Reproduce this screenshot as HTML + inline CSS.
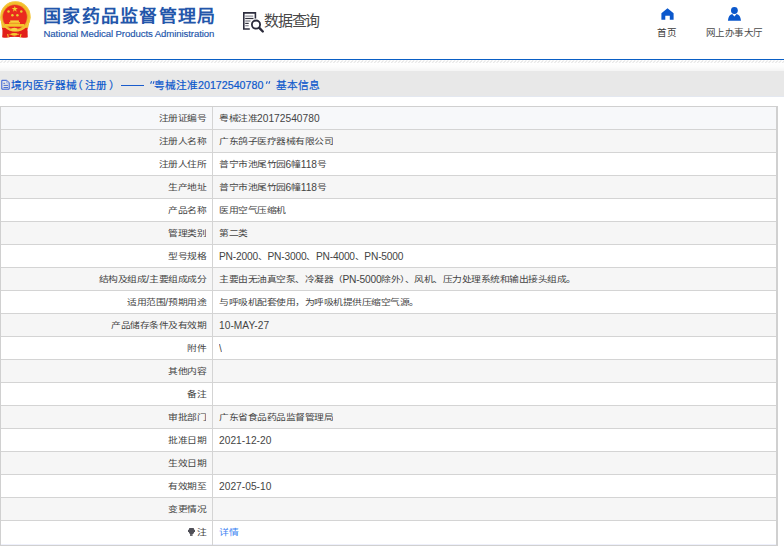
<!DOCTYPE html>
<html lang="zh-CN">
<head>
<meta charset="utf-8">
<style>
*{margin:0;padding:0;box-sizing:border-box;}
html,body{width:784px;height:551px;overflow:hidden;background:#fff;font-family:"Liberation Sans",sans-serif;}
.abs{position:absolute;}
#emblem{left:0;top:0;}
#t1{left:43px;top:1.2px;font-size:18px;font-weight:bold;color:#2356aa;white-space:nowrap;letter-spacing:1.3px;transform:scaleY(0.95);transform-origin:0 22px;}
#t2{left:43.5px;top:28px;font-size:9.6px;color:#2255aa;-webkit-text-stroke:0.15px #2255aa;white-space:nowrap;letter-spacing:-0.09px;}
#icons{left:0;top:0;}
#sqt{left:264px;top:9px;font-size:15px;color:#484848;white-space:nowrap;letter-spacing:-1.2px;}
#homet{left:657px;top:25px;font-size:9.5px;color:#3a3a3a;white-space:nowrap;}
#usert{left:706px;top:25px;font-size:9.5px;color:#4a4a4a;white-space:nowrap;letter-spacing:-0.6px;}
#bl{left:0;top:59px;width:784px;height:1px;background:#0a5fc5;}
#hatch{left:0;top:60px;width:784px;height:3px;}
#grad{left:0;top:63px;width:784px;height:8px;background:linear-gradient(#fff,#fcfcfc 50%,#f4f4f4);}
#band{left:0;top:71px;width:784px;height:26px;background:#e8e8e8;border-bottom:1px solid #e4e8f0;}
#bico{left:1px;top:79px;}
.bt{position:absolute;top:77px;font-size:10.7px;color:#0d58cc;white-space:nowrap;-webkit-text-stroke:0.2px #0d58cc;}
#tbl{left:0;top:106px;width:778px;border:1px solid #d0d0d0;border-right-width:2px;}
.r{height:23px;border-top:1px solid #d4d4d4;position:relative;font-size:9.8px;letter-spacing:-0.5px;color:#444;}
.r b{font-weight:normal;letter-spacing:0.03px;font-size:10.2px;vertical-align:-1px;}
.r b.p{letter-spacing:-0.18px;}
.s{display:inline-block;transform:scaleY(0.86);transform-origin:50% 15px;}
.s b{display:inline-block;transform:scaleY(1.163);transform-origin:50% 15px;}
.r:first-child{border-top:none;height:22px;}
.r:last-child{height:25px;box-shadow:inset 0 -1px 0 #eef0fb;}
.r:nth-child(even){background:#f6f6f6;}
.r:first-child{background:#f7f8fa;}
.bulb{display:inline-block;width:7px;height:9px;margin-right:2px;vertical-align:-1px;transform:scaleY(1.163);background:radial-gradient(circle at 3.5px 3.3px,#505058 3.1px,transparent 3.4px),linear-gradient(#0000 5.5px,#6a6a70 5.5px,#6a6a70 8px,#0000 8px) 2.2px 0/2.6px 9px no-repeat;}
.l{position:absolute;left:0;top:0;width:212px;height:100%;border-right:1px solid #d4d4d4;text-align:right;padding-right:6px;line-height:22px;white-space:nowrap;}
.v{position:absolute;left:218px;top:0;height:100%;line-height:22px;white-space:nowrap;}
a{color:#3d84f2;text-decoration:none;}
</style>
</head>
<body>
<svg id="emblem" class="abs" width="34" height="40" viewBox="0 0 34 40">
  <path d="M1.8 27.2 H28 L27.4 30 Q27.2 34 27.6 37.2 Q21 37.8 14.6 36.6 Q8 37.8 2.4 37.2 Q2.8 34 2.4 30Z" fill="#e2201a"/>
  <circle cx="15.4" cy="16.4" r="15.2" fill="#f2bd2a"/>
  <path d="M0.3 17 H4 L5 27.8 H1.9Z M30.5 17 H26.8 L25.8 27.8 H28.2Z" fill="#f2bd2a"/>
  <circle cx="15.4" cy="16.4" r="14.8" fill="none" stroke="#f8d860" stroke-width="0.7" opacity="0.6"/>
  <circle cx="14.9" cy="17" r="12.5" fill="#ea2a1e"/>
  <circle cx="14.9" cy="17" r="12.5" fill="none" stroke="#e8d040" stroke-width="0.6" opacity="0.7"/>
  <rect x="10.2" y="20.4" width="8.7" height="1.8" fill="#f6d23e"/>
  <rect x="9.1" y="22.1" width="10.9" height="1.6" fill="#f4cc30"/>
  <rect x="5" y="24" width="19.1" height="2.7" fill="#f4c82c"/>
  <ellipse cx="14.3" cy="29.3" rx="3.2" ry="1.5" fill="#f8d448"/>
  <path d="M3 30.5 Q9 33.6 14.6 33.4 Q20.5 33.6 27.4 30.5 L27.5 37.2 Q21 37.8 14.6 36.6 Q8 37.8 2.4 37.2Z" fill="#e2201a"/>
  <ellipse cx="14.3" cy="34.3" rx="3.3" ry="1.4" fill="#f4cc30"/>
  <path d="M7 34 L8.3 34.3 L8.8 37.3 L7.8 37.3Z M21.6 34 L20.3 34.3 L19.8 37.3 L20.8 37.3Z" fill="#f4cc30"/>
  <path d="M9.5 34.3 H19" stroke="#f4cc30" stroke-width="0.8"/>
  <polygon points="14.8,5.9 15.55,8.1 17.9,8.1 16,9.5 16.7,11.7 14.8,10.3 12.9,11.7 13.6,9.5 11.7,8.1 14.05,8.1" fill="#f2d030"/>
  <circle cx="8.5" cy="11.5" r="1.25" fill="#e8d030"/>
  <circle cx="21.3" cy="11.5" r="1.25" fill="#e8d030"/>
  <circle cx="12.4" cy="15.2" r="1.25" fill="#e8d030"/>
  <circle cx="17.4" cy="15.2" r="1.25" fill="#e8d030"/>
</svg>
<div id="t1" class="abs">国家药品监督管理局</div>
<div id="t2" class="abs">National Medical Products Administration</div>
<svg id="icons" class="abs" width="784" height="58" viewBox="0 0 784 58">
  <path d="M249.8 29 H243.8 V12.9 H255.4 V18.5" fill="none" stroke="#2e2e3e" stroke-width="1.6"/>
  <path d="M245.2 16.1h8" stroke="#8a8a96" stroke-width="1.2"/>
  <path d="M245.2 18.5h8.3" stroke="#33333f" stroke-width="1.2"/>
  <path d="M245.2 21h5.3" stroke="#7a7a86" stroke-width="1.2"/>
  <path d="M245.2 23.4h3.5" stroke="#33333f" stroke-width="1.2"/>
  <path d="M245.2 25.7h3.5" stroke="#8a8a96" stroke-width="1.2"/>
  <circle cx="256" cy="24.6" r="4.1" fill="#fff" stroke="#2a2a3a" stroke-width="1.8"/>
  <path d="M259.3 27.9 L262.8 31.5" stroke="#2a2a3a" stroke-width="2.4" stroke-linecap="round"/>
  <path d="M667.5 8.2 L673.6 13.2 V19.8 H669.8 V15.8 H665.3 V19.8 H661.4 V13.2 Z" fill="#0b58cc"/>
  <circle cx="734.4" cy="10.5" r="3.4" fill="#0b58cc"/>
  <path d="M727.9 20.8 Q728.5 14.6 732.2 14 L734.4 16.6 L736.6 14 Q740.4 14.6 741 20.8 Z" fill="#0b58cc"/>
</svg>
<div id="sqt" class="abs">数据查询</div>

<div id="homet" class="abs">首页</div>

<div id="usert" class="abs">网上办事大厅</div>
<div id="bl" class="abs"></div>
<svg id="hatch" class="abs" width="784" height="3">
  <defs><pattern id="hp" width="3.4" height="3" patternUnits="userSpaceOnUse"><path d="M0.3 2.9 L2.8 0.4" stroke="#e0e0e0" stroke-width="0.9"/></pattern></defs>
  <rect width="784" height="3" fill="url(#hp)"/>
</svg>
<div id="grad" class="abs"></div>
<div id="band" class="abs"></div>
<svg id="bico" class="abs" width="10" height="12" viewBox="1 79 10 12"><path d="M1.8 80.3 H6.8 L9.2 82.8 V89.2 H1.8 Z" fill="none" stroke="#2f5ad4" stroke-width="1"/><path d="M6.6 80.5 V83 H9" fill="none" stroke="#8aa0e0" stroke-width="0.8"/><path d="M3.3 83.3h1.8M3.5 85.4h4.5M3.5 87.5h4.5" stroke="#3a62d0" stroke-width="0.9"/></svg>
<div class="bt" style="left:11px">境内医疗器械</div>
<div class="bt" style="left:72px">（</div>
<div class="bt" style="left:85px">注册</div>
<div class="bt" style="left:109px">）</div>
<div class="abs" style="left:120.5px;top:85px;width:23.5px;height:1px;background:#1a5ccc"></div>
<svg class="abs" style="left:0;top:0" width="300" height="100"><path d="M151.6 81.2 L150.6 83.8 M154.1 81.2 L153.1 83.8 M267.3 81.2 L266.3 83.8 M269.8 81.2 L268.8 83.8" stroke="#1a5ccc" stroke-width="1.1"/></svg>
<div class="bt" style="left:154px">粤械注准20172540780</div>

<div class="bt" style="left:276px">基本信息</div>
<div id="tbl" class="abs">
  <div class="r"><div class="l"><span class="s">注册证编号</span></div><div class="v"><span class="s">粤械注准<b>20172540780</b></span></div></div>
  <div class="r"><div class="l"><span class="s">注册人名称</span></div><div class="v"><span class="s">广东鸽子医疗器械有限公司</span></div></div>
  <div class="r"><div class="l"><span class="s">注册人住所</span></div><div class="v"><span class="s">普宁市池尾竹园<b>6</b>幢<b>118</b>号</span></div></div>
  <div class="r"><div class="l"><span class="s">生产地址</span></div><div class="v"><span class="s">普宁市池尾竹园<b>6</b>幢<b>118</b>号</span></div></div>
  <div class="r"><div class="l"><span class="s">产品名称</span></div><div class="v"><span class="s">医用空气压缩机</span></div></div>
  <div class="r"><div class="l"><span class="s">管理类别</span></div><div class="v"><span class="s">第二类</span></div></div>
  <div class="r"><div class="l"><span class="s">型号规格</span></div><div class="v"><span class="s"><b class="p">PN-2000</b>、<b class="p">PN-3000</b>、<b class="p">PN-4000</b>、<b class="p">PN-5000</b></span></div></div>
  <div class="r"><div class="l"><span class="s">结构及组成<b>/</b>主要组成成分</span></div><div class="v"><span class="s">主要由无油真空泵、冷凝器（<b class="p">PN-5000</b>除外）、风机、压力处理系统和输出接头组成。</span></div></div>
  <div class="r"><div class="l"><span class="s">适用范围<b>/</b>预期用途</span></div><div class="v"><span class="s">与呼吸机配套使用，为呼吸机提供压缩空气源。</span></div></div>
  <div class="r"><div class="l"><span class="s">产品储存条件及有效期</span></div><div class="v"><span class="s"><b>10-MAY-27</b></span></div></div>
  <div class="r"><div class="l"><span class="s">附件</span></div><div class="v"><span class="s"><b>\</b></span></div></div>
  <div class="r"><div class="l"><span class="s">其他内容</span></div><div class="v"><span class="s"></div></span></div>
  <div class="r"><div class="l"><span class="s">备注</span></div><div class="v"><span class="s"></div></span></div>
  <div class="r"><div class="l"><span class="s">审批部门</span></div><div class="v"><span class="s">广东省食品药品监督管理局</span></div></div>
  <div class="r"><div class="l"><span class="s">批准日期</span></div><div class="v"><span class="s"><b>2021-12-20</b></span></div></div>
  <div class="r"><div class="l"><span class="s">生效日期</span></div><div class="v"><span class="s"></div></span></div>
  <div class="r"><div class="l"><span class="s">有效期至</span></div><div class="v"><span class="s"><b>2027-05-10</b></span></div></div>
  <div class="r"><div class="l"><span class="s">变更情况</span></div><div class="v"><span class="s"></div></span></div>
  <div class="r"><div class="l"><span class="s"><i class="bulb"></i>注</span></div><div class="v"><span class="s"><a>详情</a></span></div></div>
</div>
</body>
</html>
